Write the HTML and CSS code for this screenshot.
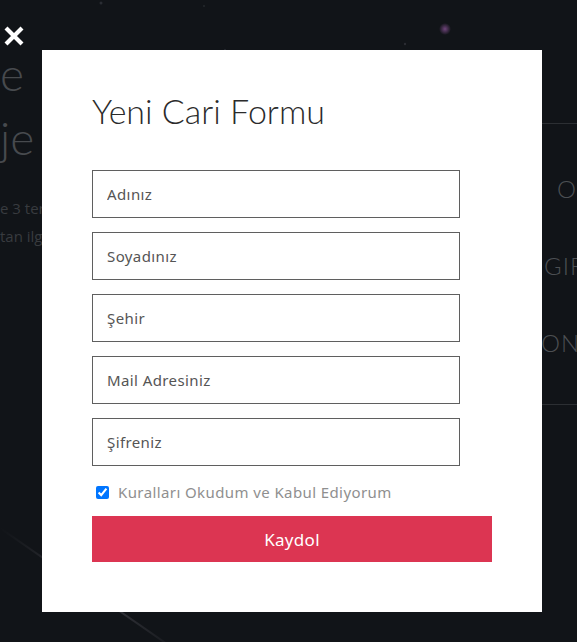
FILE: index.html
```html
<!DOCTYPE html>
<html lang="tr">
<head>
<meta charset="utf-8">
<title>Yeni Cari Formu</title>
<link rel="stylesheet" href="styles.css">
</head>
<body>
<div class="page">
  <svg class="sky" width="577" height="642" viewBox="0 0 577 642">
    <defs>
      <radialGradient id="glow">
        <stop offset="0" stop-color="#7a4a86" stop-opacity="0.9"/>
        <stop offset="1" stop-color="#7a4a86" stop-opacity="0"/>
      </radialGradient>
      <linearGradient id="streak" x1="0" y1="0" x2="1" y2="1">
        <stop offset="0" stop-color="#3a3a40" stop-opacity="0"/>
        <stop offset="0.5" stop-color="#4a4a52" stop-opacity="0.8"/>
        <stop offset="1" stop-color="#3a3a40" stop-opacity="0"/>
      </linearGradient>
    </defs>
    <circle cx="445" cy="29" r="6" fill="url(#glow)"/>
    <circle cx="101" cy="3" r="1.5" fill="#2a2d33"/>
    <circle cx="405" cy="44" r="1.2" fill="#2a2d33"/>
    <circle cx="225" cy="50" r="1" fill="#2a2d33"/>
    <circle cx="204" cy="6" r="1" fill="#25282d"/>
    <circle cx="70" cy="52" r="1" fill="#25282d"/>
    <line x1="0" y1="528" x2="190" y2="660" stroke="url(#streak)" stroke-width="2"/>
  </svg>

  <section class="hero">
    <h1 class="hero-title"><span>e</span><span>je</span></h1>
    <p class="hero-text">e 3 ter<br>tan ilg</p>
  </section>

  <nav class="side-menu">
    <a class="menu-item">O</a>
    <a class="menu-item">GIR</a>
    <a class="menu-item">ON</a>
  </nav>
</div>

<div class="overlay">
  <button class="close" type="button" aria-label="Kapat">
    <svg width="20" height="20" viewBox="0 0 20 20"><path d="M2 2 L18 18 M18 2 L2 18" stroke="#fff" stroke-width="4.2" stroke-linecap="butt"/></svg>
  </button>

  <form class="modal">
    <h2 class="modal-title">Yeni Cari Formu</h2>
    <div class="fields">
      <input class="field" type="text" placeholder="Adınız">
      <input class="field" type="text" placeholder="Soyadınız">
      <input class="field" type="text" placeholder="Şehir">
      <input class="field" type="email" placeholder="Mail Adresiniz">
      <input class="field" type="password" placeholder="Şifreniz">
    </div>
    <label class="agree"><input type="checkbox" checked> <span>Kuralları Okudum ve Kabul Ediyorum</span></label>
    <button class="submit" type="button">Kaydol</button>
  </form>
</div>
</body>
</html>
```

FILE: styles.css
```css
* { box-sizing: border-box; }

html, body {
  margin: 0;
  padding: 0;
  width: 577px;
  height: 642px;
  overflow: hidden;
  background: #111418;
  font-family: "Lato", "Noto Sans", sans-serif;
}

.page {
  position: relative;
  width: 577px;
  height: 642px;
  display: flex;
  justify-content: space-between;
  overflow: hidden;
}

.sky {
  position: absolute;
  left: 0;
  top: 0;
  pointer-events: none;
}

.hero {
  padding-top: 42px;
  width: 60px;
  white-space: nowrap;
}

.hero-title {
  margin: 0;
  font-weight: 300;
  font-size: 46px;
  line-height: 64px;
  color: #474a4e;
}

.hero-title span { display: block; }

.hero-text {
  margin: 24px 0 0;
  font-family: "Open Sans", sans-serif;
  font-size: 15px;
  line-height: 28px;
  color: #383b3f;
}

.side-menu {
  width: 35px;
  margin-top: 123px;
  height: 282px;
  border-top: 1px solid #2c2f33;
  border-bottom: 1px solid #2c2f33;
  display: flex;
  flex-direction: column;
  padding-top: 52px;
  gap: 51px;
  overflow: hidden;
  white-space: nowrap;
}

.menu-item {
  display: block;
  font-family: "Lato", sans-serif;
  font-weight: 300;
  font-size: 24px;
  line-height: 26px;
  letter-spacing: 1px;
  color: #4c4f53;
}

.side-menu .menu-item:first-child { margin-left: 15px; }
.side-menu .menu-item:nth-child(2) { margin-left: 2px; }
.side-menu .menu-item:nth-child(3) { margin-left: -1px; }

.overlay {
  position: fixed;
  inset: 0;
  padding: 50px 35px 30px 42px;
}

.close {
  position: absolute;
  left: 4px;
  top: 26px;
  width: 20px;
  height: 20px;
  padding: 0;
  border: 0;
  background: none;
  display: flex;
}

.modal {
  width: 500px;
  height: 562px;
  background: #fff;
  padding: 41px 50px 0 50px;
  display: flex;
  flex-direction: column;
}

.modal-title {
  margin: 0;
  font-family: "Lato", sans-serif;
  font-weight: 300;
  font-size: 34px;
  line-height: 40px;
  letter-spacing: 0;
  color: #2b2b2b;
}

.fields {
  margin-top: 39px;
  display: flex;
  flex-direction: column;
  gap: 14px;
}

.field {
  width: 368px;
  height: 48px;
  border: 1px solid #5f5f5f;
  border-radius: 0;
  padding: 0 14px;
  font-family: "Noto Sans", sans-serif;
  font-size: 15px;
  letter-spacing: 0.4px;
  color: #333;
  outline: none;
}

.field::placeholder { color: #555; opacity: 1; }

.agree {
  display: flex;
  align-items: center;
  margin-top: 16px;
  height: 20px;
  font-family: "Noto Sans", sans-serif;
  font-size: 15px;
  color: #8f8f8f;
  letter-spacing: 0.4px;
}

.agree input {
  margin: 0 9px 0 4px;
  width: 13px;
  height: 13px;
  accent-color: #0075ff;
}

.submit {
  margin-top: 14px;
  width: 400px;
  height: 46px;
  border: 0;
  background: #dc3552;
  color: #fff;
  font-family: "Noto Sans", sans-serif;
  font-size: 17px;
  letter-spacing: 0.3px;
}
```
